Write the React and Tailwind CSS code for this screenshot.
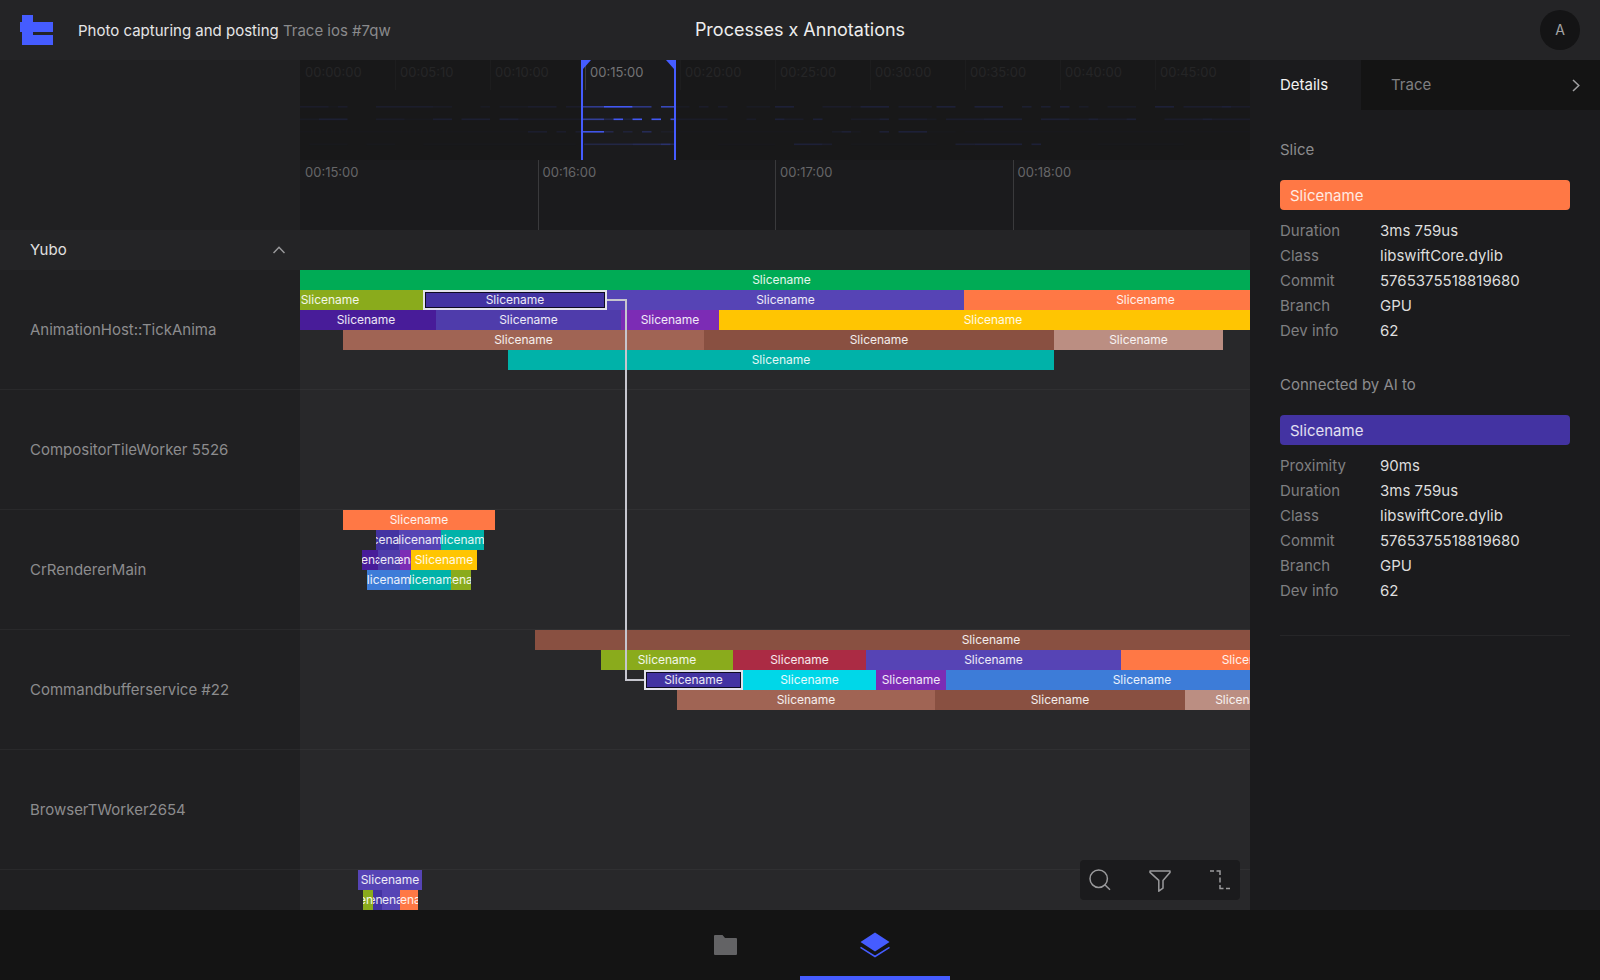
import React from "react";

const TRACK = 950;
const pct = (v) => `${(v / TRACK) * 100}%`;

const C = {
  green: "bg-[#00ab55]",
  olive: "bg-[#8aab1c]",
  indigo: "bg-[#4333a2]",
  purple: "bg-[#5644b5]",
  blueViolet: "bg-[#4f3cab]",
  deep: "bg-[#481c99]",
  violet: "bg-[#7c2cb5]",
  orange: "bg-[#ff7845]",
  yellow: "bg-[#ffc502]",
  clay: "bg-[#a06454]",
  brown: "bg-[#895041]",
  rose: "bg-[#bb8e82]",
  teal: "bg-[#00b2a9]",
  blue: "bg-[#3d7cd8]",
  crimson: "bg-[#ab2b44]",
  cyan: "bg-[#00d7e8]",
};

// Each row: [start, [[width, colour, selected?], ...]] on a 950-unit track.
const lanes = [
  {
    name: "AnimationHost::TickAnima",
    rows: [
      [0, [[963, "green"]]],
      [-63, [[186, "olive"], [184, "indigo", true], [357, "purple"], [363, "orange"]]],
      [-4, [[140, "deep"], [185, "blueViolet"], [98, "violet"], [548, "yellow"]]],
      [43, [[361, "clay"], [350, "brown"], [169, "rose"]]],
      [208, [[546, "teal"]]],
    ],
  },
  { name: "CompositorTileWorker 5526", rows: [] },
  {
    name: "CrRendererMain",
    rows: [
      [43, [[152, "orange"]]],
      [76, [[23, "indigo"], [42, "purple"], [43, "teal"]]],
      [62, [[16, "deep"], [22, "blueViolet"], [11, "violet"], [66, "yellow"]]],
      [67, [[43, "blue"], [41, "teal"], [20, "olive"]]],
    ],
  },
  {
    name: "Commandbufferservice #22",
    rows: [
      [235, [[912, "brown"]]],
      [301, [[132, "olive"], [133, "crimson"], [255, "purple"], [260, "orange"]]],
      [344, [[99, "indigo", true], [133, "cyan"], [70, "violet"], [392, "blue"]]],
      [377, [[258, "clay"], [250, "brown"], [119, "rose"]]],
    ],
  },
  { name: "BrowserTWorker2654", rows: [] },
  {
    name: "",
    rows: [
      [58, [[64, "purple"]]],
      [63, [[10, "olive"], [9, "indigo"], [18, "purple"], [18, "orange"]]],
    ],
  },
];

// [from, to, strength] in hundredths of the whole recording.
const activity = [
  [
    [0, 3, 0.5], [3, 4, 0.15], [4, 5, 0.5], [8, 14, 0.55], [14, 16, 0.35], [19, 20, 0.3], [21, 24, 0.3],
    [24, 27, 0.6], [28, 29.6, 0.5], [29.6, 32, 0.5], [32, 35, 0.95], [35, 37, 0.45], [38, 39.6, 0.7],
    [39.6, 41, 0.3], [42, 43, 0.5], [44, 45, 0.5], [47, 49.5, 0.3], [50, 52, 0.9], [55, 58, 0.5],
    [58, 59, 0.2], [59, 62, 0.9], [63, 66.5, 0.5], [67, 69, 0.9], [71, 74, 0.9], [76, 77, 0.7],
    [78, 79, 0.7], [80, 81, 0.9], [82, 83, 0.4], [85, 88, 0.4], [90, 92, 0.9], [93, 97, 0.6],
    [97, 98, 0.9], [98, 100, 0.5],
  ],
  [
    [0, 2, 0.3], [2, 5, 0.8], [8, 11, 0.4], [11, 14, 0.15], [14, 16, 0.7], [17, 20, 0.7], [21, 23, 0.8],
    [23, 29.6, 0.35], [29.6, 32, 0.55], [32, 33, 0.2], [33, 34, 0.95], [34, 35, 0.12], [35, 36, 0.95],
    [37, 38, 0.95], [39, 39.6, 0.8], [39.6, 45, 0.4], [47, 48, 0.4], [50, 51, 0.9], [51, 53, 0.4],
    [54, 55, 0.9], [58, 61, 0.4], [61, 62, 0.8], [63, 66, 0.6], [66, 67, 0.3], [68, 72, 0.6],
    [72, 76, 0.8], [78, 81, 0.8], [81, 83, 0.4], [83, 84, 0.8], [84, 87, 0.4], [87, 88, 0.8],
    [91, 95, 0.5], [95, 96, 0.8], [96, 100, 0.5],
  ],
  [
    [0, 24, 0.08], [24, 26, 0.6], [27, 28, 0.5], [29, 29.6, 0.6], [29.6, 32, 0.9], [32, 33, 0.2],
    [34, 35, 0.12], [36, 37, 0.25], [38, 39.6, 0.05], [40, 55, 0.08], [56, 57, 0.4], [57, 58, 0.8],
    [58, 59, 0.2], [61, 62, 0.8], [63, 66, 0.9], [66, 69, 0.1], [70, 100, 0.08],
  ],
  [
    [1, 5, 0.12], [7, 10, 0.12], [13, 29, 0.1], [29.9, 35, 0.18], [35, 38, 0.24], [38, 39, 0.36],
    [39, 39.6, 0.2], [44, 50, 0.08], [52, 55, 0.9], [55, 56, 0.6], [58, 67, 0.1], [69, 71, 0.7],
    [71, 76, 0.9], [77, 78, 0.9], [84, 93, 0.1],
  ],
];

const overviewTimes = [
  "00:00:00", "00:05:10", "00:10:00", "00:15:00", "00:20:00",
  "00:25:00", "00:30:00", "00:35:00", "00:40:00", "00:45:00",
];
const rulerTimes = ["00:15:00", "00:16:00", "00:17:00", "00:18:00"];

const sliceInfo = [
  ["Duration", "3ms 759us"],
  ["Class", "libswiftCore.dylib"],
  ["Commit", "5765375518819680"],
  ["Branch", "GPU"],
  ["Dev info", "62"],
];

function Logo() {
  return (
    <svg width="34" height="30" viewBox="0 0 34 30" aria-hidden="true">
      <path fill="#455cff" d="M2 0h11v7h20v10H13v3h20v10H2V17H0V7h2z" />
    </svg>
  );
}

function Header() {
  return (
    <header className="grid h-[60px] shrink-0 grid-cols-[1fr_auto_1fr] items-center bg-[#242426] px-5">
      <div className="flex items-center gap-6">
        <a href="#home" aria-label="Home">
          <Logo />
        </a>
        <p className="pt-0.5 text-[15px] text-[#e6e6e6]">
          Photo capturing and posting <span className="text-[#8a8a8c]">Trace ios #7qw</span>
        </p>
      </div>
      <h1 className="text-lg text-[#ededed]">Processes x Annotations</h1>
      <button
        type="button"
        aria-label="Account"
        className="flex size-10 items-center justify-center justify-self-end rounded-full bg-[#141415] text-sm text-[#a4a4a6]"
      >
        A
      </button>
    </header>
  );
}

function Overview() {
  return (
    <div className="relative h-[100px] overflow-hidden bg-[#1b1b1d]">
      <div className="grid grid-cols-10">
        {overviewTimes.map((t, i) => (
          <div
            key={t}
            className={`h-[30px] border-l pl-1 pt-1 text-[13px] leading-4 text-[#747476] ${
              i ? "border-[#3c3c3e]" : "border-transparent"
            }`}
          >
            {t}
          </div>
        ))}
      </div>
      <svg
        className="absolute inset-0 h-full w-full"
        viewBox="0 0 100 100"
        preserveAspectRatio="none"
        aria-hidden="true"
      >
        {activity.map((segments, row) =>
          segments.map(([from, to, strength]) => (
            <rect
              key={`${row}-${from}`}
              x={from}
              y={46 + row * 12.5}
              width={to - from}
              height="1.6"
              fill="#455cff"
              opacity={strength}
            />
          ))
        )}
      </svg>
      <div className="absolute inset-0 flex">
        <div className="w-[29.6%] bg-[#171719]/85" />
        <div className="flex w-[10%] items-start justify-between border-x-2 border-[#455cff]">
          <svg width="8" height="9" viewBox="0 0 8 9" aria-hidden="true">
            <path fill="#455cff" d="M0 0h8L0 9z" />
          </svg>
          <svg width="8" height="9" viewBox="0 0 8 9" aria-hidden="true">
            <path fill="#455cff" d="M0 0h8v9z" />
          </svg>
        </div>
        <div className="flex-1 bg-[#171719]/85" />
      </div>
    </div>
  );
}

function Ruler() {
  return (
    <div className="grid h-[70px] grid-cols-4 bg-[#1b1b1d]">
      {rulerTimes.map((t, i) => (
        <div
          key={t}
          className={`border-l pl-1 pt-1 text-[13px] leading-4 text-[#666668] ${
            i ? "border-[#3a3a3c]" : "border-transparent"
          }`}
        >
          {t}
        </div>
      ))}
    </div>
  );
}

function Slice({ width, color, selected }) {
  return (
    <div
      style={{ width: pct(width) }}
      className={`flex h-5 shrink-0 items-center justify-center overflow-hidden whitespace-nowrap text-xs text-white/90 ${C[color]} ${
        selected ? "border-2 border-[#e2e2ea] inset-ring inset-ring-black/80" : ""
      }`}
    >
      Slicename
    </div>
  );
}

function Lane({ name, rows }) {
  return (
    <div className="flex h-[120px] shrink-0">
      <div className="flex w-[300px] shrink-0 items-center border-b border-[#29292b] bg-[#202022] pl-[30px] pt-0.5 text-[15px] text-[#8c8c8e]">
        {name}
      </div>
      <div className="min-w-0 flex-1 overflow-hidden border-b border-[#303032] bg-[#28282a]">
        {rows.map(([start, slices], r) => (
          <div key={r} className="flex">
            <div style={{ marginLeft: pct(start) }} />
            {slices.map(([width, color, selected], i) => (
              <Slice key={i} width={width} color={color} selected={selected} />
            ))}
          </div>
        ))}
      </div>
    </div>
  );
}

function Connector() {
  return (
    <div className="pointer-events-none absolute inset-y-0 left-[300px] right-0">
      <div
        className="absolute top-[29px] border-t-2 border-[#c6c6ce]"
        style={{ left: pct(307), width: pct(18) }}
      />
      <div
        className="absolute top-[29px] h-[382px] border-b-2 border-l-2 border-[#c6c6ce]"
        style={{ left: pct(325), width: pct(19) }}
      />
    </div>
  );
}

function Toolbar() {
  const button = "flex size-10 items-center justify-center text-[#9a9a9c]";
  return (
    <div className="absolute bottom-2.5 right-2.5 flex gap-5 rounded-sm bg-[#1b1b1d]">
      <button type="button" aria-label="Search" className={button}>
        <svg width="22" height="22" viewBox="0 0 22 22" fill="none" stroke="currentColor" strokeWidth="1.5">
          <circle cx="9.7" cy="9.7" r="8.7" />
          <path d="M15.8 15.8l5.2 5" />
        </svg>
      </button>
      <button type="button" aria-label="Filter" className={button}>
        <svg width="22" height="24" viewBox="0 0 22 24" fill="none" stroke="currentColor" strokeWidth="1.5" strokeLinejoin="round">
          <path d="M1 3h20v1.400l-7 8v7.800l-4.200 3V12.400L1 4.400z" />
        </svg>
      </button>
      <button type="button" aria-label="Connections" className={button}>
        <svg width="20" height="20" viewBox="0 0 20 20" fill="none" stroke="currentColor" strokeWidth="1.5">
          <path d="M0 1h4M6.500 1H10v4M10 7.500v5M10 15v3.500h3.500M16 18.500h4" />
        </svg>
      </button>
    </div>
  );
}

function Timeline() {
  return (
    <section className="relative flex min-w-0 flex-1 flex-col overflow-hidden">
      <div className="flex shrink-0">
        <div className="w-[300px] shrink-0 bg-[#202022]" />
        <div className="min-w-0 flex-1">
          <Overview />
          <Ruler />
        </div>
      </div>
      <div className="h-10 shrink-0 bg-[#242426]">
        <button
          type="button"
          className="flex h-full w-[300px] items-center justify-between pl-[30px] pr-[15px] text-[15px] text-[#e0e0e0]"
        >
          Yubo
          <svg width="12" height="8" viewBox="0 0 12 8" fill="none" stroke="#9a9a9c" strokeWidth="1.5" aria-hidden="true">
            <path d="M.5 7L6 1.300 11.500 7" />
          </svg>
        </button>
      </div>
      <div className="relative flex min-h-0 flex-1 flex-col overflow-hidden">
        {lanes.map((lane, i) => (
          <Lane key={i} {...lane} />
        ))}
        <Connector />
      </div>
      <Toolbar />
    </section>
  );
}

function SliceCard({ title, color, info }) {
  return (
    <section className="pb-0.5 pt-8">
      <h2 className="text-[15px] leading-4 text-[#8c8c8e]">{title}</h2>
      <div className={`mt-[22px] flex h-[30px] items-center rounded-sm px-2.5 pt-0.5 text-[15px] text-white/85 ${color}`}>
        Slicename
      </div>
      <dl className="grid grid-cols-[100px_1fr] pt-2 text-[15px] leading-[25px]">
        {info.map(([label, value]) => (
          <React.Fragment key={label}>
            <dt className="text-[#7f7f81]">{label}</dt>
            <dd className="text-[#dedede]">{value}</dd>
          </React.Fragment>
        ))}
      </dl>
    </section>
  );
}

function Details() {
  return (
    <aside className="w-[350px] shrink-0 bg-[#1b1b1d]">
      <div role="tablist" className="flex h-[50px] text-[15px]">
        <button
          type="button"
          role="tab"
          aria-selected="true"
          className="w-[111px] pl-[30px] text-left text-[#f2f2f2]"
        >
          Details
        </button>
        <button
          type="button"
          role="tab"
          aria-selected="false"
          className="flex flex-1 items-center justify-between bg-[#141414] pl-[30px] pr-5 text-[#7f7f81]"
        >
          Trace
          <svg width="8" height="13" viewBox="0 0 8 13" fill="none" stroke="#a0a0a2" strokeWidth="1.5" aria-hidden="true">
            <path d="M1 1l5.800 5.500L1 12" />
          </svg>
        </button>
      </div>
      <div className="px-[30px]">
        <SliceCard title="Slice" color="bg-[#ff7845]" info={sliceInfo} />
        <SliceCard
          title="Connected by AI to"
          color="bg-[#4333a2]"
          info={[["Proximity", "90ms"], ...sliceInfo]}
        />
        <hr className="mt-[30px] border-[#262628]" />
      </div>
    </aside>
  );
}

function Footer() {
  const tab = "flex w-[150px] items-center justify-center border-y-4 border-t-transparent";
  return (
    <nav className="flex h-[70px] shrink-0 justify-center bg-[#141414]">
      <a href="#files" aria-label="Files" className={`${tab} border-b-transparent`}>
        <svg width="23" height="20" viewBox="0 0 23 20" aria-hidden="true">
          <path fill="#636365" d="M1 0h7.500l2.500 3H22a1 1 0 0 1 1 1v15a1 1 0 0 1-1 1H1a1 1 0 0 1-1-1V1a1 1 0 0 1 1-1z" />
        </svg>
      </a>
      <a href="#layers" aria-label="Layers" aria-current="page" className={`${tab} border-b-[#455cff]`}>
        <svg width="30" height="26" viewBox="0 0 30 26" aria-hidden="true">
          <path fill="#455cff" d="M15 .5L29.500 10 15 19.500.5 10z" />
          <path fill="none" stroke="#455cff" strokeWidth="1.500" d="M.5 15.300L15 24.500l14.500-9.200" />
        </svg>
      </a>
    </nav>
  );
}

export default function App() {
  return (
    <div className="flex h-screen flex-col overflow-hidden bg-[#1b1b1d] font-['Inter',sans-serif]">
      <Header />
      <main className="flex min-h-0 flex-1">
        <Timeline />
        <Details />
      </main>
      <Footer />
    </div>
  );
}
